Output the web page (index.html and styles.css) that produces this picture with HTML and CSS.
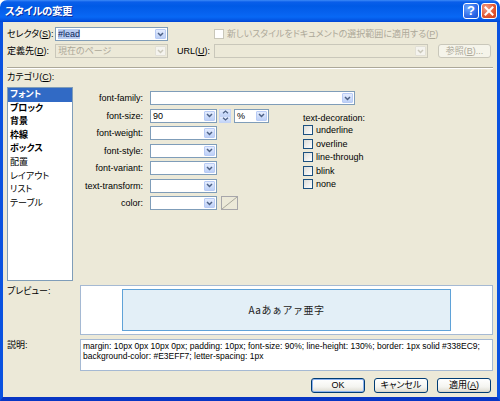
FILE: index.html
```html
<!DOCTYPE html>
<html lang="ja">
<head>
<meta charset="utf-8">
<title>スタイルの変更</title>
<link rel="stylesheet" href="styles.css">
</head>
<body>
<div class="window">
  <div class="titlebar">
    <span class="title">スタイルの変更</span>
    <div class="tb-buttons">
      <span class="tb-btn tb-help">?</span>
      <span class="tb-btn tb-close"><svg width="14" height="14" viewBox="0 0 14 14"><path d="M3.5 3.5 L10.5 10.5 M10.5 3.5 L3.5 10.5" stroke="#fff" stroke-width="2" stroke-linecap="square"/></svg></span>
    </div>
  </div>
  <div class="frame">
    <div class="top-grid">
      <span class="lbl sel-lbl">セレクタ(<u>S</u>):</span>
      <div class="combo sel-combo"><span class="combo-text"><span class="hl">#lead</span></span><span class="drop"><svg width="7" height="5" viewBox="0 0 7 5"><path d="M1 1 L3.5 3.5 L6 1" fill="none" stroke="#4D6185" stroke-width="1.5"/></svg></span></div>
      <div class="chk-line disabled"><span class="chk"></span><span>新しいスタイルをドキュメントの選択範囲に適用する(<u>P</u>)</span></div>
      <span class="lbl def-lbl">定義先(<u>D</u>):</span>
      <div class="combo disabled def-combo"><span class="combo-text">現在のページ</span><span class="drop"><svg width="7" height="5" viewBox="0 0 7 5"><path d="M1 1 L3.5 3.5 L6 1" fill="none" stroke="#C9C7BA" stroke-width="1.5"/></svg></span></div>
      <span class="lbl url-lbl">URL(<u>U</u>):</span>
      <div class="combo disabled url-combo"><span class="combo-text"></span><span class="drop"><svg width="7" height="5" viewBox="0 0 7 5"><path d="M1 1 L3.5 3.5 L6 1" fill="none" stroke="#C9C7BA" stroke-width="1.5"/></svg></span></div>
      <span class="btn btn-small disabled browse">参照(<u>B</u>)...</span>
    </div>
    <div class="separator"></div>
    <div class="cat-label">カテゴリ(<u>C</u>):</div>
    <div class="main">
      <ul class="listbox">
        <li class="sel b">フォント</li>
        <li class="b">ブロック</li>
        <li class="b">背景</li>
        <li class="b">枠線</li>
        <li class="b">ボックス</li>
        <li>配置</li>
        <li>レイアウト</li>
        <li>リスト</li>
        <li>テーブル</li>
      </ul>
      <div class="form">
        <span class="flabel r1">font-family:</span>
        <div class="field ff r1"><div class="combo w205"><span class="combo-text"></span><span class="drop"><svg width="7" height="5" viewBox="0 0 7 5"><path d="M1 1 L3.5 3.5 L6 1" fill="none" stroke="#4D6185" stroke-width="1.5"/></svg></span></div></div>

        <span class="flabel r2">font-size:</span>
        <div class="field r2">
          <div class="combo w67"><span class="combo-text">90</span><span class="drop"><svg width="7" height="5" viewBox="0 0 7 5"><path d="M1 1 L3.5 3.5 L6 1" fill="none" stroke="#4D6185" stroke-width="1.5"/></svg></span></div>
          <div class="spin"><span class="spin-half"><svg width="7" height="4" viewBox="0 0 7 4"><path d="M1 3.2 L3.5 1 L6 3.2" fill="none" stroke="#4D6185" stroke-width="1.3"/></svg></span><span class="spin-half"><svg width="7" height="4" viewBox="0 0 7 4"><path d="M1 0.8 L3.5 3 L6 0.8" fill="none" stroke="#4D6185" stroke-width="1.3"/></svg></span></div>
          <div class="combo unit"><span class="combo-text">%</span><span class="drop"><svg width="7" height="5" viewBox="0 0 7 5"><path d="M1 1 L3.5 3.5 L6 1" fill="none" stroke="#4D6185" stroke-width="1.5"/></svg></span></div>
        </div>

        <span class="flabel r3">font-weight:</span>
        <div class="field r3"><div class="combo w67"><span class="combo-text"></span><span class="drop"><svg width="7" height="5" viewBox="0 0 7 5"><path d="M1 1 L3.5 3.5 L6 1" fill="none" stroke="#4D6185" stroke-width="1.5"/></svg></span></div></div>

        <span class="flabel r4">font-style:</span>
        <div class="field r4"><div class="combo w67"><span class="combo-text"></span><span class="drop"><svg width="7" height="5" viewBox="0 0 7 5"><path d="M1 1 L3.5 3.5 L6 1" fill="none" stroke="#4D6185" stroke-width="1.5"/></svg></span></div></div>

        <span class="flabel r5">font-variant:</span>
        <div class="field r5"><div class="combo w67"><span class="combo-text"></span><span class="drop"><svg width="7" height="5" viewBox="0 0 7 5"><path d="M1 1 L3.5 3.5 L6 1" fill="none" stroke="#4D6185" stroke-width="1.5"/></svg></span></div></div>

        <span class="flabel r6">text-transform:</span>
        <div class="field r6"><div class="combo w67"><span class="combo-text"></span><span class="drop"><svg width="7" height="5" viewBox="0 0 7 5"><path d="M1 1 L3.5 3.5 L6 1" fill="none" stroke="#4D6185" stroke-width="1.5"/></svg></span></div></div>

        <span class="flabel r7">color:</span>
        <div class="field r7">
          <div class="combo w67"><span class="combo-text"></span><span class="drop"><svg width="7" height="5" viewBox="0 0 7 5"><path d="M1 1 L3.5 3.5 L6 1" fill="none" stroke="#4D6185" stroke-width="1.5"/></svg></span></div>
          <span class="swatch"><svg width="15" height="12" viewBox="0 0 15 12"><path d="M0 12 L15 0" stroke="#A9A79C" stroke-width="1"/></svg></span>
        </div>

        <div class="deco">
          <div class="deco-title">text-decoration:</div>
          <div class="deco-item"><span class="chk"></span><span>underline</span></div>
          <div class="deco-item"><span class="chk"></span><span>overline</span></div>
          <div class="deco-item"><span class="chk"></span><span>line-through</span></div>
          <div class="deco-item"><span class="chk"></span><span>blink</span></div>
          <div class="deco-item"><span class="chk"></span><span>none</span></div>
        </div>
      </div>
    </div>
    <div class="preview-row">
      <span class="side-label">プレビュー:</span>
      <div class="preview-box">
        <div class="preview-inner">Aaあぁアァ亜字</div>
      </div>
    </div>
    <div class="desc-row">
      <span class="side-label">説明:</span>
      <div class="desc-box">margin: 10px 0px 10px 0px; padding: 10px; font-size: 90%; line-height: 130%; border: 1px solid #338EC9;<br>background-color: #E3EFF7; letter-spacing: 1px</div>
    </div>
    <div class="buttons">
      <span class="btn default">OK</span>
      <span class="btn">キャンセル</span>
      <span class="btn">適用(<u>A</u>)</span>
    </div>
  </div>
</div>
</body>
</html>
```

FILE: styles.css
```css
* { box-sizing: border-box; margin: 0; padding: 0; }
html, body { width: 500px; height: 401px; overflow: hidden; background: #fff; }
body {
  font-family: "Liberation Sans", "Noto Sans CJK JP", sans-serif;
  font-size: 9px;
  line-height: 12px;
  color: #000;
  font-feature-settings: "palt" 1;
}
u { text-decoration: underline; }

.window { width: 500px; height: 401px; display: flex; flex-direction: column; }

.titlebar {
  flex: none;
  height: 22px;
  display: flex;
  align-items: center;
  justify-content: space-between;
  padding: 0 3px 0 5px;
  border-radius: 7px 7px 0 0;
  background: linear-gradient(#3D8AF7 0, #0A5EEA 2px, #005AE6 6px, #0661EE 12px, #0868F5 17px, #0356E4 20px, #0044D4 22px);
}
.title {
  color: #fff;
  font-weight: bold;
  font-size: 10.5px;
  font-family: "Noto Sans CJK JP", sans-serif;
  text-shadow: 1px 1px 0 #0B2FA0;
  letter-spacing: -0.5px;
}
.tb-buttons { display: flex; gap: 2px; }
.tb-btn {
  width: 16px; height: 16px;
  border: 1px solid #fff;
  border-radius: 3px;
  display: flex; align-items: center; justify-content: center;
}
.tb-help {
  background: radial-gradient(circle at 30% 30%, #6AA6FF, #2A66E6 65%, #1A4FCC);
  color: #fff;
  font: bold 13px/14px "Liberation Sans", sans-serif;
}
.tb-close { background: radial-gradient(circle at 30% 30%, #F4A08A, #E0552F 60%, #C8401E); }

.frame {
  flex: 1;
  background: #ECE9D8;
  border-style: solid;
  border-color: #0A52E0;
  border-bottom-color: #0836C4;
  border-width: 0 3px 4px 3px;
  padding: 5px 4px 0 4px;
  display: flex;
  flex-direction: column;
}

.top-grid {
  display: grid;
  grid-template-columns: 48px 113px 46px 224px 53px;
  grid-template-rows: 14px 14px;
  row-gap: 3px;
}
.lbl { line-height: 14px; white-space: nowrap; }
.sel-lbl { grid-row: 1; grid-column: 1; }
.sel-combo { grid-row: 1; grid-column: 2; }
.def-lbl { grid-row: 2; grid-column: 1; }
.def-combo { grid-row: 2; grid-column: 2; }
.url-lbl { grid-row: 2; grid-column: 3; padding-left: 9px; }
.url-combo { grid-row: 2; grid-column: 4; width: 214px; }
.browse { grid-row: 2; grid-column: 5; }

.combo {
  display: flex;
  height: 14px;
  border: 1px solid #7F9DB9;
  background: #fff;
  padding: 1px;
}
.combo-text {
  flex: 1;
  line-height: 10px;
  padding-left: 1px;
  overflow: hidden;
  white-space: nowrap;
}
.hl { background: #B9CCF0; color: #0B1E5A; }
.drop {
  width: 11px; height: 10px;
  flex: none;
  border: 1px solid #B8CBF5;
  border-radius: 1px;
  background: linear-gradient(#E4ECFE, #BDD0F7);
  display: flex; align-items: center; justify-content: center;
}
.combo.disabled { background: #ECE9D8; border-color: #C9C7BA; color: #ACA899; }
.combo.disabled .drop { background: #F4F3EE; border-color: #E2E0D6; }

.chk-line {
  grid-column: 4 / 6;
  grid-row: 1;
  display: flex;
  align-items: center;
  gap: 3px;
  white-space: nowrap;
}
.chk {
  width: 10px; height: 10px;
  flex: none;
  border: 1px solid #1C5180;
  background: linear-gradient(135deg, #DCDCD7, #fff);
}
.chk-line.disabled { color: #ACA899; }
.chk-line.disabled .chk { border-color: #C9C7BA; background: #fff; }

.btn {
  width: 54px; height: 15px;
  border: 1px solid #003C74;
  border-radius: 3px;
  background: linear-gradient(#FFFFFF 0%, #F4F4F0 60%, #E3E1D8 90%, #D6D0C5 100%);
  text-align: center;
  line-height: 13px;
  white-space: nowrap;
}
.btn.default { box-shadow: inset 0 0 0 1px #8DB2EE; }
.btn-small { width: 53px; height: 14px; line-height: 12px; }
.btn.disabled { border-color: #C9C7BA; color: #ACA899; background: #F5F4EA; }

.separator {
  margin-top: 9px;
  height: 2px;
  border-top: 1px solid #ACA899;
  border-bottom: 1px solid #fff;
}
.cat-label { margin-top: 2px; line-height: 12px; }

.main { margin-top: 4px; height: 194px; display: flex; }
.listbox {
  width: 66px;
  flex: none;
  border: 1px solid #7F9DB9;
  background: #fff;
  list-style: none;
}
.listbox li { height: 13.6px; line-height: 13.6px; padding-left: 2px; white-space: nowrap; }
.listbox li.b { font-weight: bold; }
.listbox li.sel { background: #316AC5; color: #fff; }

.form {
  flex: 1;
  display: grid;
  grid-template-columns: 77px 153px 1fr;
  grid-template-rows: repeat(7, 14px);
  row-gap: 3.5px;
  padding-top: 4px;
  align-content: start;
}
.flabel {
  grid-column: 1;
  text-align: right;
  padding-right: 7px;
  line-height: 14px;
  white-space: nowrap;
}
.field { grid-column: 2; display: flex; }
.ff { grid-column: 2 / 4; }
.r1 { grid-row: 1; } .r2 { grid-row: 2; } .r3 { grid-row: 3; } .r4 { grid-row: 4; }
.r5 { grid-row: 5; } .r6 { grid-row: 6; } .r7 { grid-row: 7; }
.w205 { width: 205px; }
.w67 { width: 67px; }
.spin {
  width: 12px; height: 14px;
  margin-left: 2px;
  display: flex; flex-direction: column;
}
.spin-half {
  height: 7px;
  border: 1px solid #C4D4F6;
  background: linear-gradient(#E4ECFE, #C3D5F8);
  display: flex; align-items: center; justify-content: center;
}
.unit { width: 35px; margin-left: 3px; }
.swatch {
  width: 17px; height: 14px;
  margin-left: 4px;
  border: 1px solid #A7A6AA;
  background: #ECE9D8;
  display: block;
}
.swatch svg { display: block; }

.deco { grid-column: 3; grid-row: 2 / 8; padding-top: 3px; }
.deco-title { line-height: 12px; white-space: nowrap; }
.deco-item { height: 13.5px; display: flex; align-items: center; gap: 3px; white-space: nowrap; }

.preview-row { margin-top: 4px; height: 50px; display: flex; flex: none; }
.desc-row { margin-top: 4px; height: 32px; display: flex; flex: none; }
.side-label { width: 73px; flex: none; line-height: 12px; }
.preview-box {
  flex: 1;
  border: 1px solid #A5B9D3;
  background: #fff;
  padding-top: 3px;
}
.preview-inner {
  width: 329px; height: 42px;
  margin: 0 auto;
  background: #E3EFF7;
  border: 1px solid #5FA2D8;
  text-align: center;
  line-height: 40px;
  font-family: "Noto Sans CJK JP", sans-serif;
  font-size: 10px;
  letter-spacing: 0.5px;
  color: #222;
  font-feature-settings: normal;
}
.desc-box {
  flex: 1;
  border: 1px solid #A5B9D3;
  background: #fff;
  padding: 1px 2px;
  font-size: 8.5px;
  line-height: 10px;
  white-space: nowrap;
  overflow: hidden;
}

.buttons {
  margin-top: 7px;
  display: flex;
  justify-content: flex-end;
  gap: 9px;
  padding-right: 2px;
}
```
